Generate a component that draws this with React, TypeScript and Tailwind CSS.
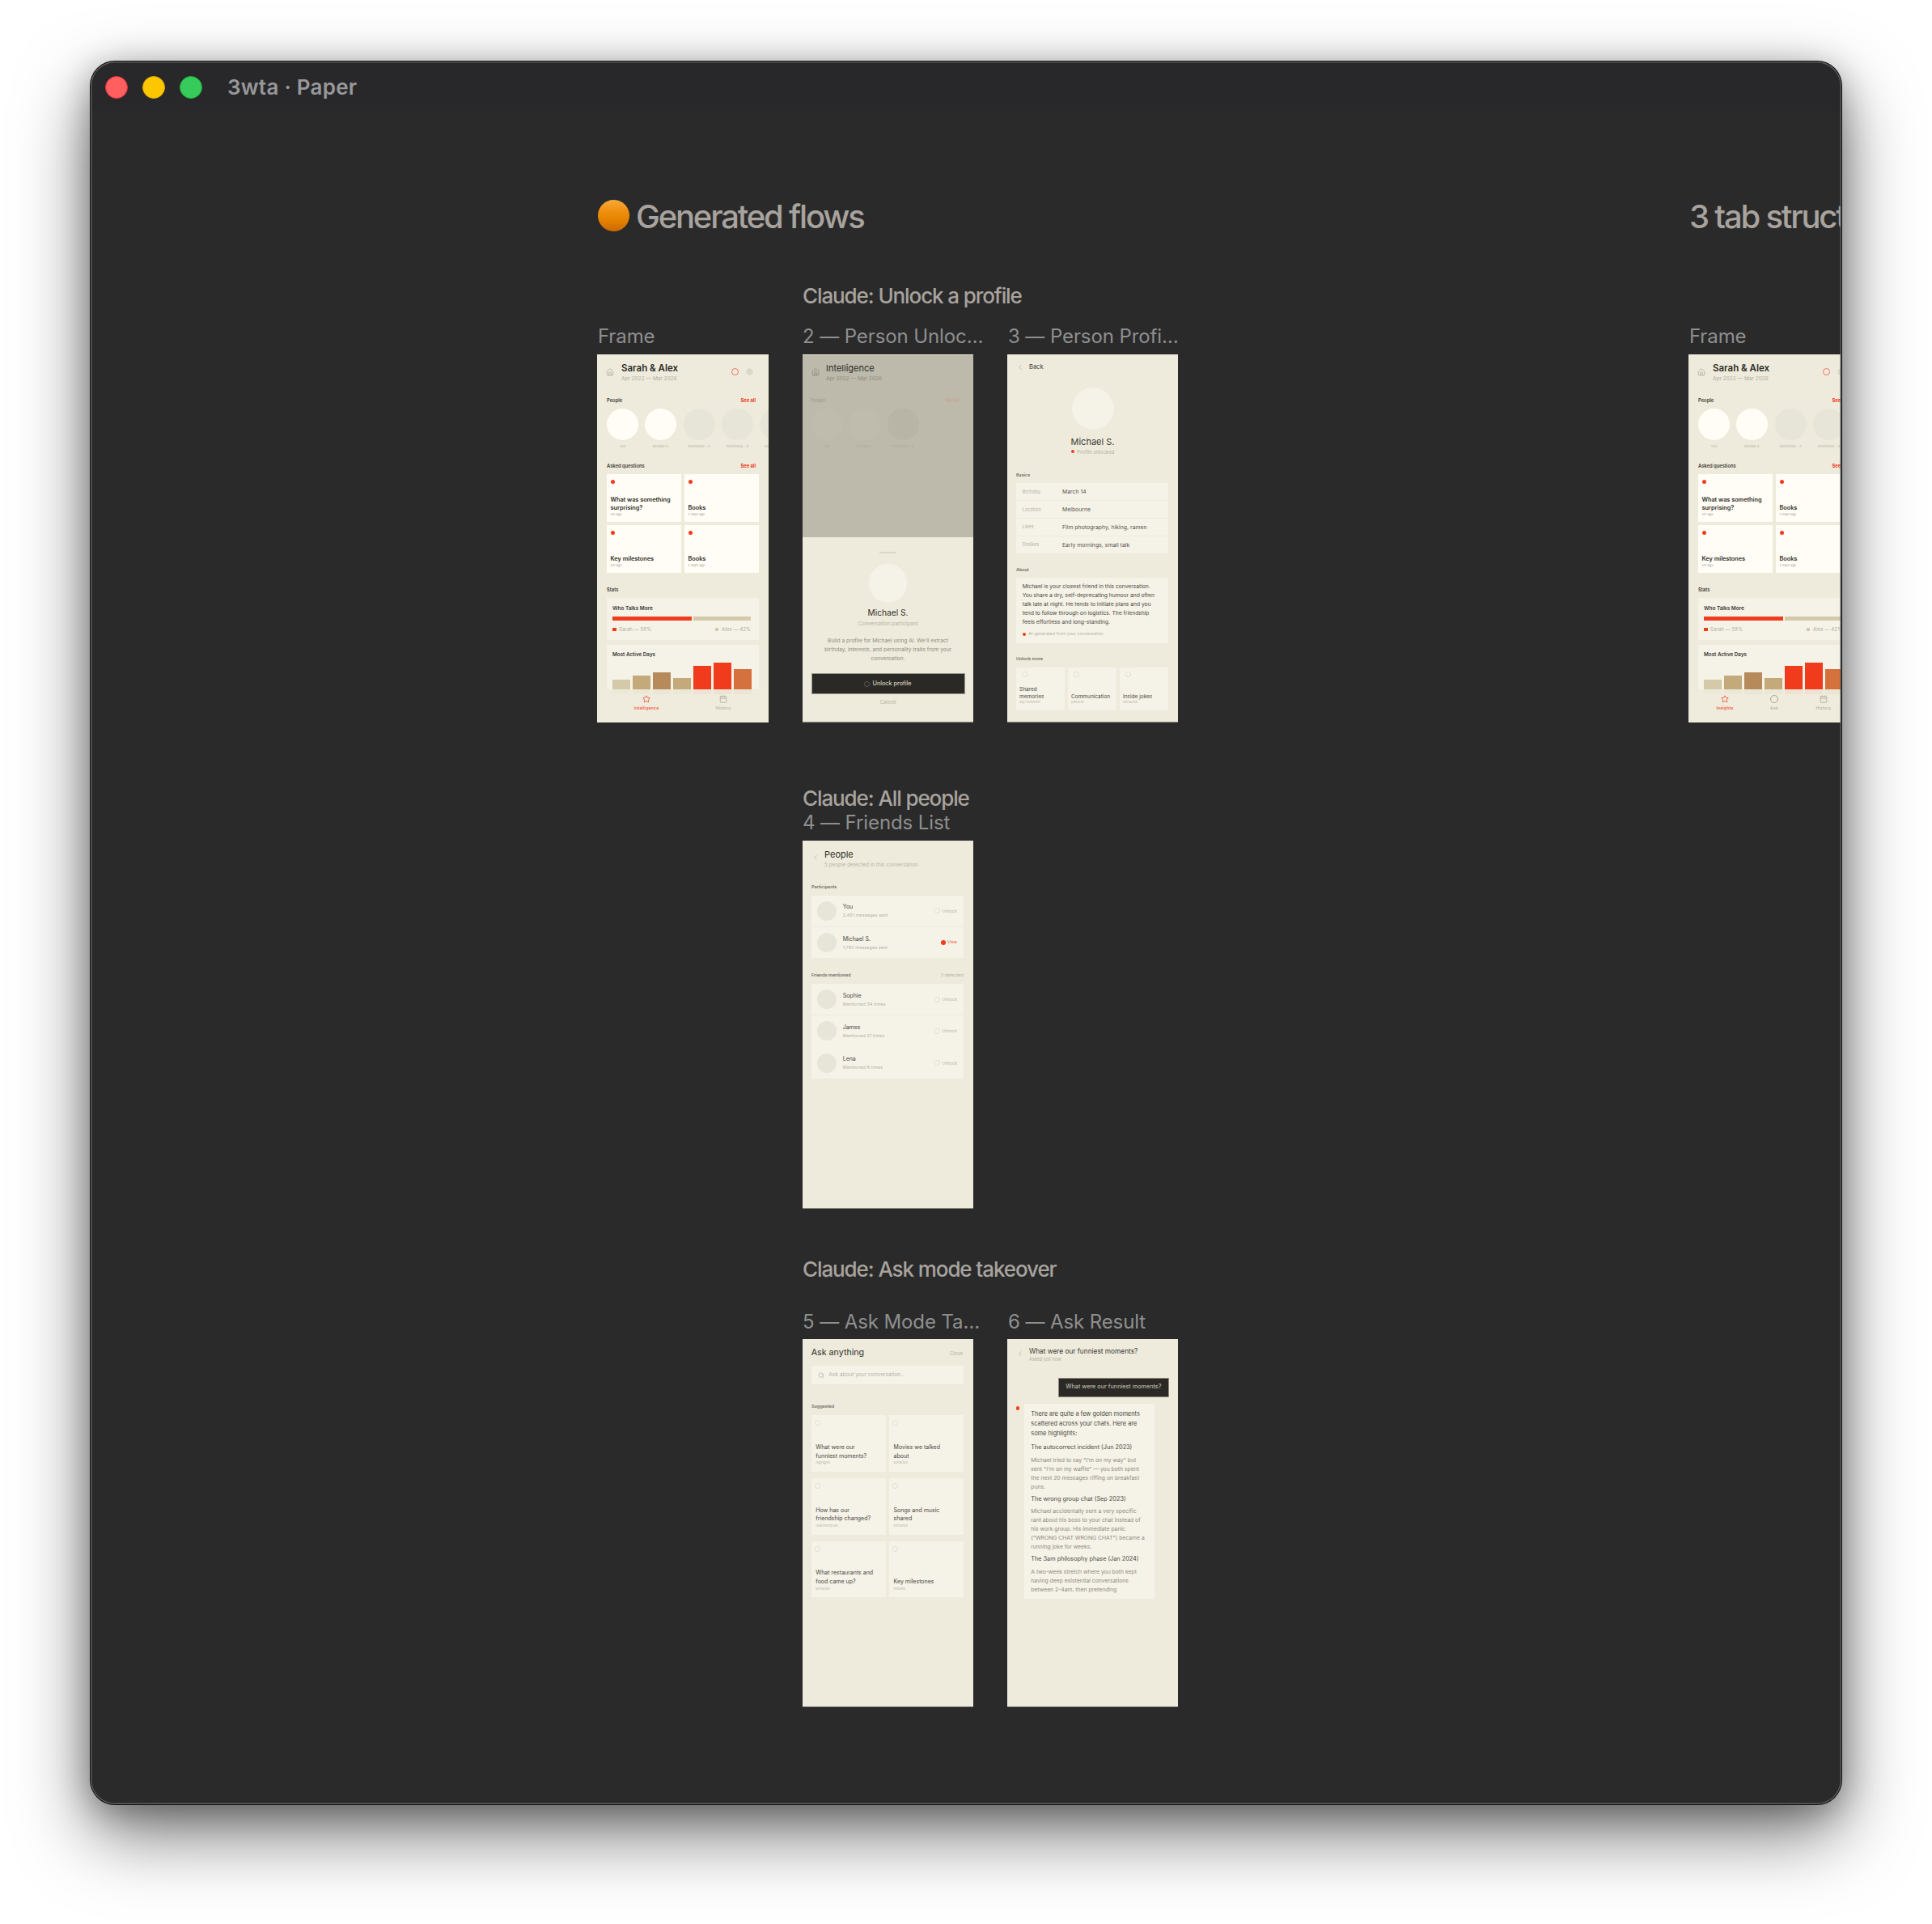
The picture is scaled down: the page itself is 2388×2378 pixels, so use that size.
import React from "react";
import { House, Settings, Star, Calendar, ChevronLeft, Search } from "lucide-react";

const Spin = ({ className = "" }: { className?: string }) => (
  <svg viewBox="0 0 10 10" className={className} fill="none">
    <circle cx="5" cy="5" r="4.4" stroke="currentColor" strokeWidth="0.8" strokeDasharray="1.6 1" />
  </svg>
);
const Dot = ({ className = "" }: { className?: string }) => (
  <span className={`block shrink-0 rounded-full bg-[#f03c1c] ${className}`} />
);
const Lines = ({ lines, className = "" }: { lines: string[]; className?: string }) => (
  <div className={className}>
    {lines.map((l) => (
      <div key={l} className="whitespace-nowrap">{l}</div>
    ))}
  </div>
);

const Frame = ({ className, children }: { className: string; children: React.ReactNode }) => (
  <div className={`absolute flex h-[455px] flex-col overflow-hidden bg-[#eeebdc] shadow-[inset_0_-1px_0_#8d8b80] ${className}`}>
    {children}
  </div>
);

const CanvasLabel = ({ className, children }: { className: string; children: React.ReactNode }) => (
  <div className={`absolute whitespace-nowrap text-[24px] leading-[30px] tracking-[-0.1px] text-[#8f8f8f] ${className}`}>{children}</div>
);
const CanvasHead = ({ className, children }: { className: string; children: React.ReactNode }) => (
  <div className={`absolute whitespace-nowrap text-[26px] font-medium leading-[32px] tracking-[-1.1px] text-[#a8a39e] ${className}`}>{children}</div>
);

const SecHead = ({ title, className = "", right }: { title: string; className?: string; right?: boolean }) => (
  <div className={`flex h-[8px] items-center justify-between pl-[12px] pr-[16px] text-[5.8px] font-semibold leading-[8px] text-[#3a3833] ${className}`}>
    <span>{title}</span>
    {right && <span className="font-bold text-[#f03c1c]">See all</span>}
  </div>
);

const people: [string, string][] = [
  ["You", "bg-[#fffdf5]"],
  ["Michael S.", "bg-[#fffdf5]"],
  ["mentioned - A", "bg-[#e7e5d8]"],
  ["mentioned - B", "bg-[#e7e5d8]"],
  ["mentioned - C", "bg-[#e7e5d8]"],
];

const QCard = ({ title, sub }: { title: string[]; sub: string }) => (
  <div className="flex flex-col bg-[#fffdf5] px-[4.5px] pb-[6px] pt-[6.5px]">
    <Dot className="size-[5px]" />
    <div className="mt-auto text-[7.3px] font-semibold leading-[10px] text-[#2f2d28]">
      <Lines lines={title} />
    </div>
    <div className="text-[3.8px] leading-[6px] tracking-[0.1px] text-[#a8a598]">{sub}</div>
  </div>
);

const bars: [string, string][] = [
  ["h-[18px]", "bg-[#d4c9a9]"],
  ["h-[23px]", "bg-[#c4a97a]"],
  ["h-[27px]", "bg-[#b78a5c]"],
  ["h-[20px]", "bg-[#c4a97a]"],
  ["h-[35px]", "bg-[#f03c1c]"],
  ["h-[39px]", "bg-[#f03c1c]"],
  ["h-[31px]", "bg-[#d4713c]"],
];

const Tab = ({ label, active, icon }: { label: string; active?: boolean; icon: React.ReactNode }) => (
  <div className={`flex flex-col items-center pt-[7px] ${active ? "text-[#f2604a]" : "text-[#b5b2a5]"}`}>
    {icon}
    <div className={`mt-[2.5px] text-[5.2px] leading-[7px] tracking-[0.15px] ${active ? "font-semibold" : "font-medium"}`}>{label}</div>
  </div>
);

const HomeScreen = ({ three }: { three?: boolean }) => (
  <>
    <div className="flex h-[47px] items-start pl-[11px] pr-[19.5px] pt-[10px]">
      <House className="mt-[7px] size-[10px] text-[#a8a598]" strokeWidth={1.8} />
      <div className="ml-[9px]">
        <div className="text-[11.5px] font-semibold leading-[14px] text-[#2f2d28]">Sarah &amp; Alex</div>
        <div className="text-[6.5px] leading-[12px] text-[#b0ad9f]">Apr 2022 — Mar 2026</div>
      </div>
      <div className="ml-auto mt-[6.5px] flex items-center gap-[9px]">
        <span className="block size-[9px] rounded-full border border-[#f2705a]" />
        <Settings className="size-[9px] text-[#b5b2a5]" strokeWidth={1.8} />
      </div>
    </div>
    <SecHead title="People" right className="mt-[6px]" />
    <div className="mt-[6px] flex gap-[8.33px] pl-[12px]">
      {people.map(([n, c]) => (
        <div key={n} className="flex w-[39px] shrink-0 flex-col items-center">
          <div className={`size-[39px] rounded-full ${c}`} />
          <div className="mt-[5px] whitespace-nowrap text-[3.8px] leading-[6px] tracking-[0.15px] text-[#b5b2a5]">{n}</div>
        </div>
      ))}
    </div>
    <SecHead title="Asked questions" right className="mt-[17px]" />
    <div className="ml-[12px] mt-[6px] grid grid-cols-[92px_92px] grid-rows-[58.5px_58.5px] gap-x-[4px] gap-y-[4.5px]">
      <QCard title={["What was something", "surprising?"]} sub="5m ago" />
      <QCard title={["Books"]} sub="2 days ago" />
      <QCard title={["Key milestones"]} sub="5m ago" />
      <QCard title={["Books"]} sub="2 days ago" />
    </div>
    <SecHead title="Stats" className="mt-[17.5px]" />
    <div className="ml-[12px] mt-[6px] h-[52px] w-[188px] shrink-0 bg-[#f5f2e7] px-[7px] pt-[9px]">
      <div className="text-[6.4px] font-semibold leading-[8px] text-[#3a3833]">Who Talks More</div>
      <div className="mt-[6px] flex h-[4.5px] w-[171px] gap-[2px]">
        <div className="w-[98px] bg-[#f03c1c]" />
        <div className="w-[71px] bg-[#d4c9a9]" />
      </div>
      <div className="mt-[7.5px] flex items-center justify-between pr-[3px] text-[6px] leading-[8px] tracking-[0.1px] text-[#b0ad9f]">
        <span className="flex items-center gap-[3.5px]"><span className="size-[4.5px] bg-[#f03c1c]" />Sarah — 58%</span>
        <span className="flex items-center gap-[3.5px]"><span className="size-[4.5px] bg-[#d4c9a9]" />Alex — 42%</span>
      </div>
    </div>
    <div className="ml-[12px] mt-[6px] h-[70px] w-[188px] shrink-0 bg-[#f5f2e7] px-[7px] pt-[8px]">
      <div className="text-[6.3px] font-semibold leading-[8px] text-[#3a3833]">Most Active Days</div>
      <div className="mt-[6px] flex h-[39px] items-end gap-[3px]">
        {bars.map(([h, c], i) => (
          <div key={i} className={`w-[22px] ${h} ${c}`} />
        ))}
      </div>
    </div>
    {three ? (
      <div className="absolute bottom-0 left-0 grid h-[41px] w-full grid-cols-[61px_61px_61px] bg-[#eeebdc]/95 pl-[14.5px]">
        <Tab active label="Insights" icon={<Star className="size-[10px]" strokeWidth={2.4} />} />
        <Tab label="Ask" icon={<span className="block size-[10px] rounded-full border border-[#a8a598]" />} />
        <Tab label="History" icon={<Calendar className="size-[10px]" strokeWidth={2.2} />} />
      </div>
    ) : (
      <div className="absolute bottom-0 left-0 grid h-[41px] w-full grid-cols-[95px_95px] bg-[#eeebdc]/95 pl-[13.5px]">
        <Tab active label="Intelligence" icon={<Star className="size-[10px]" strokeWidth={2.4} />} />
        <Tab label="History" icon={<Calendar className="size-[10px]" strokeWidth={2.2} />} />
      </div>
    )}
  </>
);

const UnlockScreen = () => (
  <>
    <div className="h-[226px] shrink-0 overflow-hidden bg-[#bdb9ab] shadow-[inset_0_1px_0_#e8e6da]">
      <div className="flex h-[47px] items-start pl-[11px] pt-[10px]">
        <House className="mt-[7px] size-[10px] text-[#85827a]" strokeWidth={1.8} />
        <div className="ml-[8px]">
          <div className="text-[11px] leading-[14px] text-[#2f2d28]">Intelligence</div>
          <div className="text-[6.5px] leading-[12px] text-[#8f8c80]">Apr 2022 — Mar 2026</div>
        </div>
      </div>
      <div className="mt-[6px] flex h-[8px] items-center justify-between pl-[10px] pr-[17px] text-[5.5px] font-semibold leading-[8px] text-[#a5a295]">
        <span>People</span>
        <span className="text-[#c9a594]">See all</span>
      </div>
      <div className="mt-[6px] flex gap-[8.33px] pl-[10px]">
        {[["You", "bg-[#bfbbad]"], ["Michael S.", "bg-[#bfbbad]"], ["mentioned - A", "bg-[#b8b4a6]"]].map(([n, c]) => (
          <div key={n} className="flex w-[39px] flex-col items-center">
            <div className={`size-[39px] rounded-full ${c}`} />
            <div className="mt-[5px] whitespace-nowrap text-[3.8px] leading-[6px] tracking-[0.15px] text-[#aeaa9c]">{n}</div>
          </div>
        ))}
      </div>
    </div>
    <div className="flex flex-1 flex-col items-center">
      <div className="mt-[18px] h-[2px] w-[21.5px] bg-[#d9d6c8]" />
      <div className="mt-[13px] size-[47.5px] rounded-full bg-[#f5f2e7]" />
      <div className="mt-[5.5px] text-[10.2px] leading-[14px] text-[#2f2d28]">Michael S.</div>
      <div className="mt-[3px] text-[6.4px] leading-[8px] text-[#b5b2a5]">Conversation participant</div>
      <Lines
        className="mt-[11.5px] text-center text-[6.6px] leading-[11px] text-[#8f8c80]"
        lines={["Build a profile for Michael using AI. We'll extract", "birthday, interests, and personality traits from your", "conversation."]}
      />
      <div className="mt-[12.5px] flex h-[26px] w-[190px] items-center justify-center gap-[3px] border-[0.7px] border-[#9a978c] bg-[#2b2925] text-[7.3px] text-[#e8e5d8]">
        <Spin className="size-[7px] text-[#b5b2a5]" />
        Unlock profile
      </div>
      <div className="mt-[6px] text-[6px] leading-[8px] text-[#b5b2a5]">Cancel</div>
    </div>
  </>
);

const Small = ({ className = "", children }: { className?: string; children: React.ReactNode }) => (
  <div className={`pl-[11px] text-[5.4px] font-semibold leading-[8px] text-[#6f6c62] ${className}`}>{children}</div>
);

const basics = [
  ["Birthday", "March 14"],
  ["Location", "Melbourne"],
  ["Likes", "Film photography, hiking, ramen"],
  ["Dislikes", "Early mornings, small talk"],
];
const unlockMore: [string[], string][] = [
  [["Shared", "memories"], "key moments"],
  [["Communication"], "patterns"],
  [["Inside jokes"], "extracted"],
];

const ProfileScreen = () => (
  <>
    <div className="flex h-[32px] shrink-0 items-center gap-[6px] pl-[11px] text-[7.5px] text-[#3a3833]">
      <ChevronLeft className="size-[10px] text-[#b5b2a5]" strokeWidth={1.8} />
      Back
    </div>
    <div className="mx-auto mt-[9px] size-[52px] shrink-0 rounded-full bg-[#f5f2e7]" />
    <div className="mt-[8px] text-center text-[11px] leading-[14px] text-[#3a3833]">Michael S.</div>
    <div className="mt-[1px] flex h-[8px] items-center justify-center gap-[3px] text-[6px] text-[#b5b2a5]">
      <Dot className="size-[4.5px]" />
      Profile unlocked
    </div>
    <Small className="mt-[21px]">Basics</Small>
    <div className="ml-[11px] mt-[6px] flex w-[188px] flex-col gap-[0.7px]">
      {basics.map(([k, v]) => (
        <div key={k} className="flex h-[21.3px] items-center bg-[#f5f2e7] pl-[7.7px]">
          <span className="w-[49.3px] text-[5.5px] tracking-[0.1px] text-[#b5b2a5]">{k}</span>
          <span className="text-[6.8px] tracking-[0.05px] text-[#55534c]">{v}</span>
        </div>
      ))}
    </div>
    <Small className="mt-[15.7px]">About</Small>
    <div className="ml-[11px] mt-[6px] h-[81px] w-[188px] shrink-0 bg-[#f5f2e7] pl-[7.7px] pt-[6.5px]">
      <Lines
        className="text-[6.7px] leading-[11px] text-[#4a4842]"
        lines={[
          "Michael is your closest friend in this conversation.",
          "You share a dry, self-deprecating humour and often",
          "talk late at night. He tends to initiate plans and you",
          "tend to follow through on logistics. The friendship",
          "feels effortless and long-standing.",
        ]}
      />
      <div className="mt-[4.5px] flex h-[8px] items-center gap-[3px] text-[5.2px] tracking-[0.05px] text-[#b5b2a5]">
        <Dot className="size-[4.5px]" />
        AI-generated from your conversation
      </div>
    </div>
    <Small className="mt-[15px]">Unlock more</Small>
    <div className="ml-[11px] mt-[7px] grid w-[188px] grid-cols-3 gap-[4px]">
      {unlockMore.map(([t, s]) => (
        <div key={s} className="flex h-[53px] flex-col bg-[#f5f2e7] pb-[7.5px] pl-[4px] pt-[5.5px]">
          <Spin className="ml-[2.5px] size-[7px] text-[#bdbaad]" />
          <Lines lines={t} className="mt-auto text-[6.5px] leading-[8.5px] text-[#4a4842]" />
          <div className="text-[3.9px] leading-[5px] tracking-[0.1px] text-[#b5b2a5]">{s}</div>
        </div>
      ))}
    </div>
  </>
);

const PersonRow = ({ name, sub, view }: { name: string; sub: string; view?: boolean }) => (
  <div className="flex h-[38.5px] items-center bg-[#f5f2e7] pl-[7.3px] pr-[8px]">
    <div className="size-[24px] rounded-full bg-[#e7e5d8]" />
    <div className="ml-[7.7px]">
      <div className="text-[7px] leading-[10px] text-[#4a4842]">{name}</div>
      <div className="mt-[1px] text-[5.4px] leading-[8px] tracking-[0.12px] text-[#b5b2a5]">{sub}</div>
    </div>
    {view ? (
      <div className="ml-auto flex items-center gap-[2px] text-[5.2px] text-[#f2604a]">
        <Dot className="size-[5.5px]" />
        View
      </div>
    ) : (
      <div className="ml-auto flex items-center gap-[2.5px] text-[5.4px] tracking-[0.1px] text-[#b5b2a5]">
        <Spin className="size-[7px] text-[#bdbaad]" />
        Unlock
      </div>
    )}
  </div>
);

const PeopleScreen = () => (
  <>
    <div className="flex h-[47px] shrink-0 items-start pl-[11px] pt-[10px]">
      <ChevronLeft className="mt-[6px] size-[10px] text-[#b5b2a5]" strokeWidth={1.8} />
      <div className="ml-[6px]">
        <div className="text-[11px] leading-[14px] text-[#2f2d28]">People</div>
        <div className="text-[6.2px] leading-[12px] tracking-[0.1px] text-[#b5b2a5]">5 people detected in this conversation</div>
      </div>
    </div>
    <Small className="mt-[6px]">Participants</Small>
    <div className="ml-[10.7px] mt-[6.7px] flex w-[188.3px] flex-col gap-[0.7px]">
      <PersonRow name="You" sub="2,451 messages sent" />
      <PersonRow name="Michael S." sub="1,780 messages sent" view />
    </div>
    <div className="mt-[16.6px] flex h-[8px] w-[199px] items-center justify-between pl-[11px] text-[5.4px] font-semibold leading-[8px] text-[#6f6c62]">
      <span>Friends mentioned</span>
      <span className="text-[5.4px] font-normal tracking-[0.1px] text-[#b5b2a5]">3 detected</span>
    </div>
    <div className="ml-[10.7px] mt-[7px] flex w-[188.3px] flex-col gap-[0.7px]">
      <PersonRow name="Sophie" sub="Mentioned 34 times" />
      <PersonRow name="James" sub="Mentioned 21 times" />
      <PersonRow name="Lena" sub="Mentioned 8 times" />
    </div>
  </>
);

const asks: [string[], string][] = [
  [["What were our", "funniest moments?"], "highlights"],
  [["Movies we talked", "about"], "extracted"],
  [["How has our", "friendship changed?"], "relationship arc"],
  [["Songs and music", "shared"], "extracted "],
  [["What restaurants and", "food came up?"], "extracted  "],
  [["Key milestones"], "timeline"],
];

const AskScreen = () => (
  <>
    <div className="mx-[10.7px] mt-[10px] flex items-center justify-between">
      <span className="text-[10.7px] leading-[14px] text-[#2f2d28]">Ask anything</span>
      <span className="mr-[2.3px] text-[6px] text-[#b5b2a5]">Close</span>
    </div>
    <div className="ml-[10.7px] mt-[9px] flex h-[23px] w-[188.3px] shrink-0 items-center gap-[5.5px] bg-[#f5f2e7] pl-[8px] text-[6.6px] text-[#b5b2a5]">
      <Search className="size-[8px] text-[#a8a598]" strokeWidth={1.8} />
      Ask about your conversation...
    </div>
    <Small className="mt-[23px]">Suggested</Small>
    <div className="ml-[10.7px] mt-[7.3px] grid w-[188.3px] grid-cols-2 gap-x-[4.3px] gap-y-[8px]">
      {asks.map(([t, s]) => (
        <div key={s} className="flex h-[69.7px] flex-col bg-[#f5f2e7] pb-[8.5px] pl-[5.6px] pt-[6px]">
          <Spin className="-ml-[1.1px] size-[7px] text-[#bdbaad]" />
          <Lines lines={t} className="mt-auto text-[7px] leading-[10.7px] text-[#4a4842]" />
          <div className="text-[3.7px] leading-[5px] tracking-[0.1px] text-[#b5b2a5]">{s}</div>
        </div>
      ))}
    </div>
  </>
);

const Head6 = ({ className, children }: { className: string; children: string }) => (
  <div className={`whitespace-nowrap text-[7.3px] leading-[11px] text-[#4a4842] ${className}`}>{children}</div>
);
const Para = ({ className, lines }: { className: string; lines: string[] }) => (
  <Lines className={`text-[6.8px] leading-[11px] text-[#8f8c80] ${className}`} lines={lines} />
);

const ResultScreen = () => (
  <>
    <div className="flex h-[29px] shrink-0 items-start pl-[11px] pt-[9.5px]">
      <ChevronLeft className="mt-[3.5px] size-[10px] text-[#b5b2a5]" strokeWidth={1.8} />
      <div className="ml-[6px]">
        <div className="text-[8.3px] leading-[11px] text-[#3a3833]">What were our funniest moments?</div>
        <div className="mt-[0.5px] text-[5.5px] leading-[8px] text-[#b5b2a5]">Asked just now</div>
      </div>
    </div>
    <div className="ml-auto mr-[11.3px] mt-[18.7px] flex h-[24px] w-[136.7px] shrink-0 items-center justify-center border-[0.7px] border-[#8d8b80] bg-[#2b2925] text-[7.3px] text-[#cfcbbd]">
      What were our funniest moments?
    </div>
    <div className="ml-[10.75px] mt-[8.6px] flex items-start gap-[5.45px]">
      <Dot className="mt-[3.2px] size-[4.5px]" />
      <div className="h-[241px] w-[161.3px] bg-[#f5f2e7] pl-[8.6px] pt-[7px]">
        <Lines
          className="text-[7.4px] leading-[12px] text-[#4a4842]"
          lines={["There are quite a few golden moments", "scattered across your chats. Here are", "some highlights:"]}
        />
        <Head6 className="mt-[4.5px]">The autocorrect incident (Jun 2023)</Head6>
        <Para
          className="mt-[5px]"
          lines={[
            "Michael tried to say \"I'm on my way\" but",
            "sent \"I'm on my waffle\" — you both spent",
            "the next 20 messages riffing on breakfast",
            "puns.",
          ]}
        />
        <Head6 className="mt-[4px]">The wrong group chat (Sep 2023)</Head6>
        <Para
          className="mt-[4.4px]"
          lines={[
            "Michael accidentally sent a very specific",
            "rant about his boss to your chat instead of",
            "his work group. His immediate panic",
            "(\"WRONG CHAT WRONG CHAT\") became a",
            "running joke for weeks.",
          ]}
        />
        <Head6 className="mt-[3.6px]">The 3am philosophy phase (Jan 2024)</Head6>
        <Para
          className="mt-[5.4px]"
          lines={[
            "A two-week stretch where you both kept",
            "having deep existential conversations",
            "between 2-4am, then pretending",
          ]}
        />
      </div>
    </div>
  </>
);

export default function App() {
  return (
    <div className="h-[2378px] w-[2388px] overflow-hidden bg-white pl-[112px] pt-[76px] font-['Inter',sans-serif]">
      <div className="relative flex h-[2154px] w-[2164px] flex-col overflow-hidden rounded-[30px] bg-[#2a2a2a] shadow-[0_0_0_1px_#111,0_36px_90px_rgba(0,0,0,0.55),0_8px_40px_rgba(0,0,0,0.3)]">
        <div className="flex h-[62px] shrink-0 items-start bg-[#28282a] pl-[18px] pt-[18px]">
          <span className="size-[28px] rounded-full border border-[#e0353f] bg-[#ff5f5f]" />
          <span className="ml-[18px] size-[28px] rounded-full border border-[#dca700] bg-[#fdc700]" />
          <span className="ml-[18px] size-[28px] rounded-full border border-[#1fae3c] bg-[#36cb5b]" />
          <span className="ml-[31px] text-[26px] font-semibold leading-[28px] tracking-[0.25px] text-[#98989a]">3wta · Paper</span>
        </div>
        <div className="relative flex-1 overflow-hidden">
          <div className="absolute left-[627px] top-[109px] size-[39px] rounded-full bg-[linear-gradient(180deg,#f5a93a_0%,#f09010_35%,#e68200_65%,#c96800_100%)]" />
          <div className="absolute left-[674px] top-[104px] whitespace-nowrap text-[40px] font-medium leading-[52px] tracking-[-2.2px] text-[#a8a39e]">Generated flows</div>
          <CanvasHead className="left-[880px] top-[212px]">Claude: Unlock a profile</CanvasHead>
          <CanvasLabel className="left-[627px] top-[263px]">Frame</CanvasLabel>
          <CanvasLabel className="left-[880px] top-[263px]">2 — Person Unloc…</CanvasLabel>
          <CanvasLabel className="left-[1134px] top-[263px]">3 — Person Profi…</CanvasLabel>
          <Frame className="left-[626px] top-[300px] w-[212px]"><HomeScreen /></Frame>
          <Frame className="left-[880px] top-[300px] w-[211px]"><UnlockScreen /></Frame>
          <Frame className="left-[1133px] top-[300px] w-[211px]"><ProfileScreen /></Frame>

          <CanvasHead className="left-[880px] top-[833px]">Claude: All people</CanvasHead>
          <CanvasLabel className="left-[880px] top-[864px]">4 — Friends List</CanvasLabel>
          <Frame className="left-[880px] top-[901px] w-[211px]"><PeopleScreen /></Frame>

          <CanvasHead className="left-[880px] top-[1415px]">Claude: Ask mode takeover</CanvasHead>
          <CanvasLabel className="left-[880px] top-[1481px]">5 — Ask Mode Ta…</CanvasLabel>
          <CanvasLabel className="left-[1134px] top-[1481px]">6 — Ask Result</CanvasLabel>
          <Frame className="left-[880px] top-[1517px] w-[211px]"><AskScreen /></Frame>
          <Frame className="left-[1133px] top-[1517px] w-[211px]"><ResultScreen /></Frame>

          <div className="absolute left-[1976px] top-[104px] whitespace-nowrap text-[40px] font-medium leading-[52px] tracking-[-2.2px] text-[#a8a39e]">3 tab structure</div>
          <CanvasLabel className="left-[1976px] top-[263px]">Frame</CanvasLabel>
          <Frame className="left-[1975px] top-[300px] w-[212px]"><HomeScreen three /></Frame>
        </div>
        <div className="pointer-events-none absolute inset-0 rounded-[30px] shadow-[inset_0_0_0_1.5px_#5a5a5a]" />
      </div>
    </div>
  );
}
